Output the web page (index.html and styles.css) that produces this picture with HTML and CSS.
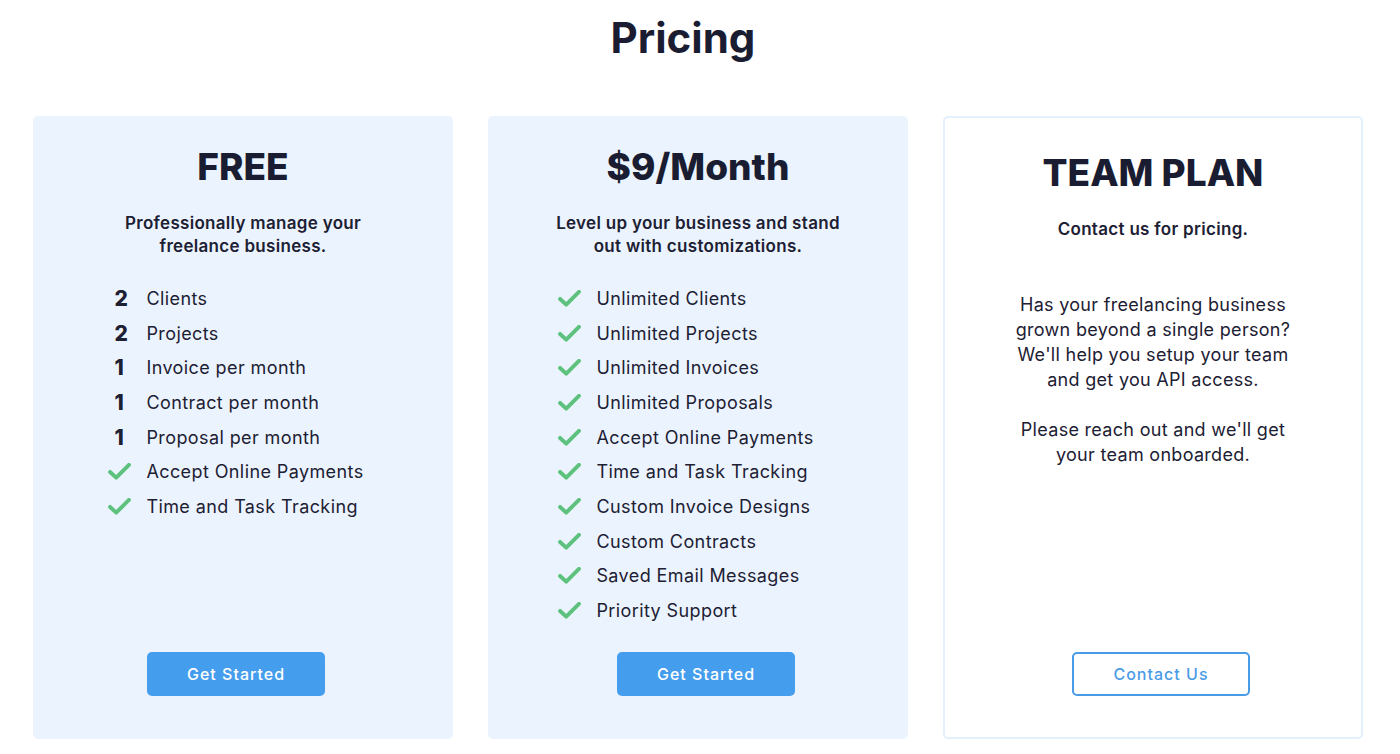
FILE: index.html
```html
<!DOCTYPE html>
<html lang="en">
<head>
    <meta charset="UTF-8">
    <meta name="viewport" content="width=device-width, initial-scale=1.0">
    <title>Pricing</title>
    <link rel="stylesheet" href="styles.css">
</head>
<body>
    <h1 class="page-title">Pricing</h1>

    <div class="plans">
        <div class="plan">
            <h2 class="plan-name">FREE</h2>
            <p class="plan-desc">Professionally manage your<br>freelance business.</p>
            <ul class="features">
                <li><span class="mark num">2</span>Clients</li>
                <li><span class="mark num">2</span>Projects</li>
                <li><span class="mark num">1</span>Invoice per month</li>
                <li><span class="mark num">1</span>Contract per month</li>
                <li><span class="mark num">1</span>Proposal per month</li>
                <li><span class="mark"><svg class="check" viewBox="0 0 24 18"><path d="M2 9.5l6.5 6L22 2" /></svg></span>Accept Online Payments</li>
                <li><span class="mark"><svg class="check" viewBox="0 0 24 18"><path d="M2 9.5l6.5 6L22 2" /></svg></span>Time and Task Tracking</li>
            </ul>
            <div class="plan-action">
                <button class="btn btn-primary">Get Started</button>
            </div>
        </div>

        <div class="plan">
            <h2 class="plan-name">$9/Month</h2>
            <p class="plan-desc">Level up your business and stand<br>out with customizations.</p>
            <ul class="features wide">
                <li><span class="mark"><svg class="check" viewBox="0 0 24 18"><path d="M2 9.5l6.5 6L22 2" /></svg></span>Unlimited Clients</li>
                <li><span class="mark"><svg class="check" viewBox="0 0 24 18"><path d="M2 9.5l6.5 6L22 2" /></svg></span>Unlimited Projects</li>
                <li><span class="mark"><svg class="check" viewBox="0 0 24 18"><path d="M2 9.5l6.5 6L22 2" /></svg></span>Unlimited Invoices</li>
                <li><span class="mark"><svg class="check" viewBox="0 0 24 18"><path d="M2 9.5l6.5 6L22 2" /></svg></span>Unlimited Proposals</li>
                <li><span class="mark"><svg class="check" viewBox="0 0 24 18"><path d="M2 9.5l6.5 6L22 2" /></svg></span>Accept Online Payments</li>
                <li><span class="mark"><svg class="check" viewBox="0 0 24 18"><path d="M2 9.5l6.5 6L22 2" /></svg></span>Time and Task Tracking</li>
                <li><span class="mark"><svg class="check" viewBox="0 0 24 18"><path d="M2 9.5l6.5 6L22 2" /></svg></span>Custom Invoice Designs</li>
                <li><span class="mark"><svg class="check" viewBox="0 0 24 18"><path d="M2 9.5l6.5 6L22 2" /></svg></span>Custom Contracts</li>
                <li><span class="mark"><svg class="check" viewBox="0 0 24 18"><path d="M2 9.5l6.5 6L22 2" /></svg></span>Saved Email Messages</li>
                <li><span class="mark"><svg class="check" viewBox="0 0 24 18"><path d="M2 9.5l6.5 6L22 2" /></svg></span>Priority Support</li>
            </ul>
            <div class="plan-action shift-right">
                <button class="btn btn-primary">Get Started</button>
            </div>
        </div>

        <div class="plan plan-outline">
            <h2 class="plan-name">TEAM PLAN</h2>
            <p class="plan-desc">Contact us for pricing.</p>
            <div class="plan-text">
                <p>Has your freelancing business<br>grown beyond a single person?<br>We'll help you setup your team<br>and get you API access.</p>
                <p>Please reach out and we'll get<br>your team onboarded.</p>
            </div>
            <div class="plan-action shift-right">
                <button class="btn btn-outline">Contact Us</button>
            </div>
        </div>
    </div>
</body>
</html>
```

FILE: styles.css
```css
body {
    font-family: Inter, "Open Sans", sans-serif;
    margin: 0;
    padding: 0;
    background-color: #ffffff;
    color: #1d2033;
}

.page-title {
    margin: 12px 0 0;
    padding-right: 34px;
    text-align: center;
    font-size: 42px;
    line-height: 52px;
    font-weight: 700;
    color: #1a1d32;
}

.plans {
    display: grid;
    grid-template-columns: repeat(3, 420px);
    gap: 35px;
    margin: 52px 0 0 33px;
}

.plan {
    background-color: #ebf4fe;
    border-radius: 5px;
    height: 623px;
    box-sizing: border-box;
    padding: 28px 0 43px;
    display: flex;
    flex-direction: column;
}

.plan-outline {
    background-color: #ffffff;
    border: 2px solid #e4f0fd;
    padding-top: 32px;
    padding-bottom: 41px;
}

.plan-name {
    margin: 0;
    text-align: center;
    font-size: 37px;
    line-height: 46px;
    font-weight: 800;
    color: #1a1d32;
}

.plan-desc {
    margin: 22px 0 0;
    text-align: center;
    font-size: 17px;
    line-height: 23px;
    font-weight: 600;
    letter-spacing: 0.3px;
}

.features {
    list-style: none;
    margin: 23px auto 0;
    padding: 0 14px 0 0;
}

.features.wide {
    padding-right: 24px;
}

.features li {
    display: flex;
    align-items: center;
    height: 34.7px;
    font-size: 18px;
    letter-spacing: 0.4px;
}

.mark {
    width: 38px;
    flex-shrink: 0;
    display: flex;
    align-items: center;
}

.num {
    font-size: 21px;
    font-weight: 800;
    padding-left: 6px;
    box-sizing: border-box;
}

.check {
    width: 23px;
    height: 17px;
    fill: none;
    stroke: #5ec27e;
    stroke-width: 4.2;
    stroke-linecap: round;
    stroke-linejoin: round;
}

.plan-text {
    margin-top: 51px;
    text-align: center;
    font-size: 18px;
    line-height: 25px;
    letter-spacing: 0.3px;
}

.plan-text p {
    margin: 0 0 25px;
}

.plan-action {
    margin-top: auto;
    display: flex;
    justify-content: center;
    padding-right: 14px;
}

.plan-action.shift-right {
    padding-right: 0;
    padding-left: 16px;
}

.btn {
    width: 178px;
    height: 44px;
    border-radius: 5px;
    font-family: inherit;
    font-size: 16px;
    font-weight: 500;
    letter-spacing: 1px;
    cursor: pointer;
}

.btn-primary {
    background-color: #459ded;
    color: #ffffff;
    border: none;
}

.btn-outline {
    background-color: #ffffff;
    color: #4a9be6;
    border: 2px solid #4a9be6;
}
```
